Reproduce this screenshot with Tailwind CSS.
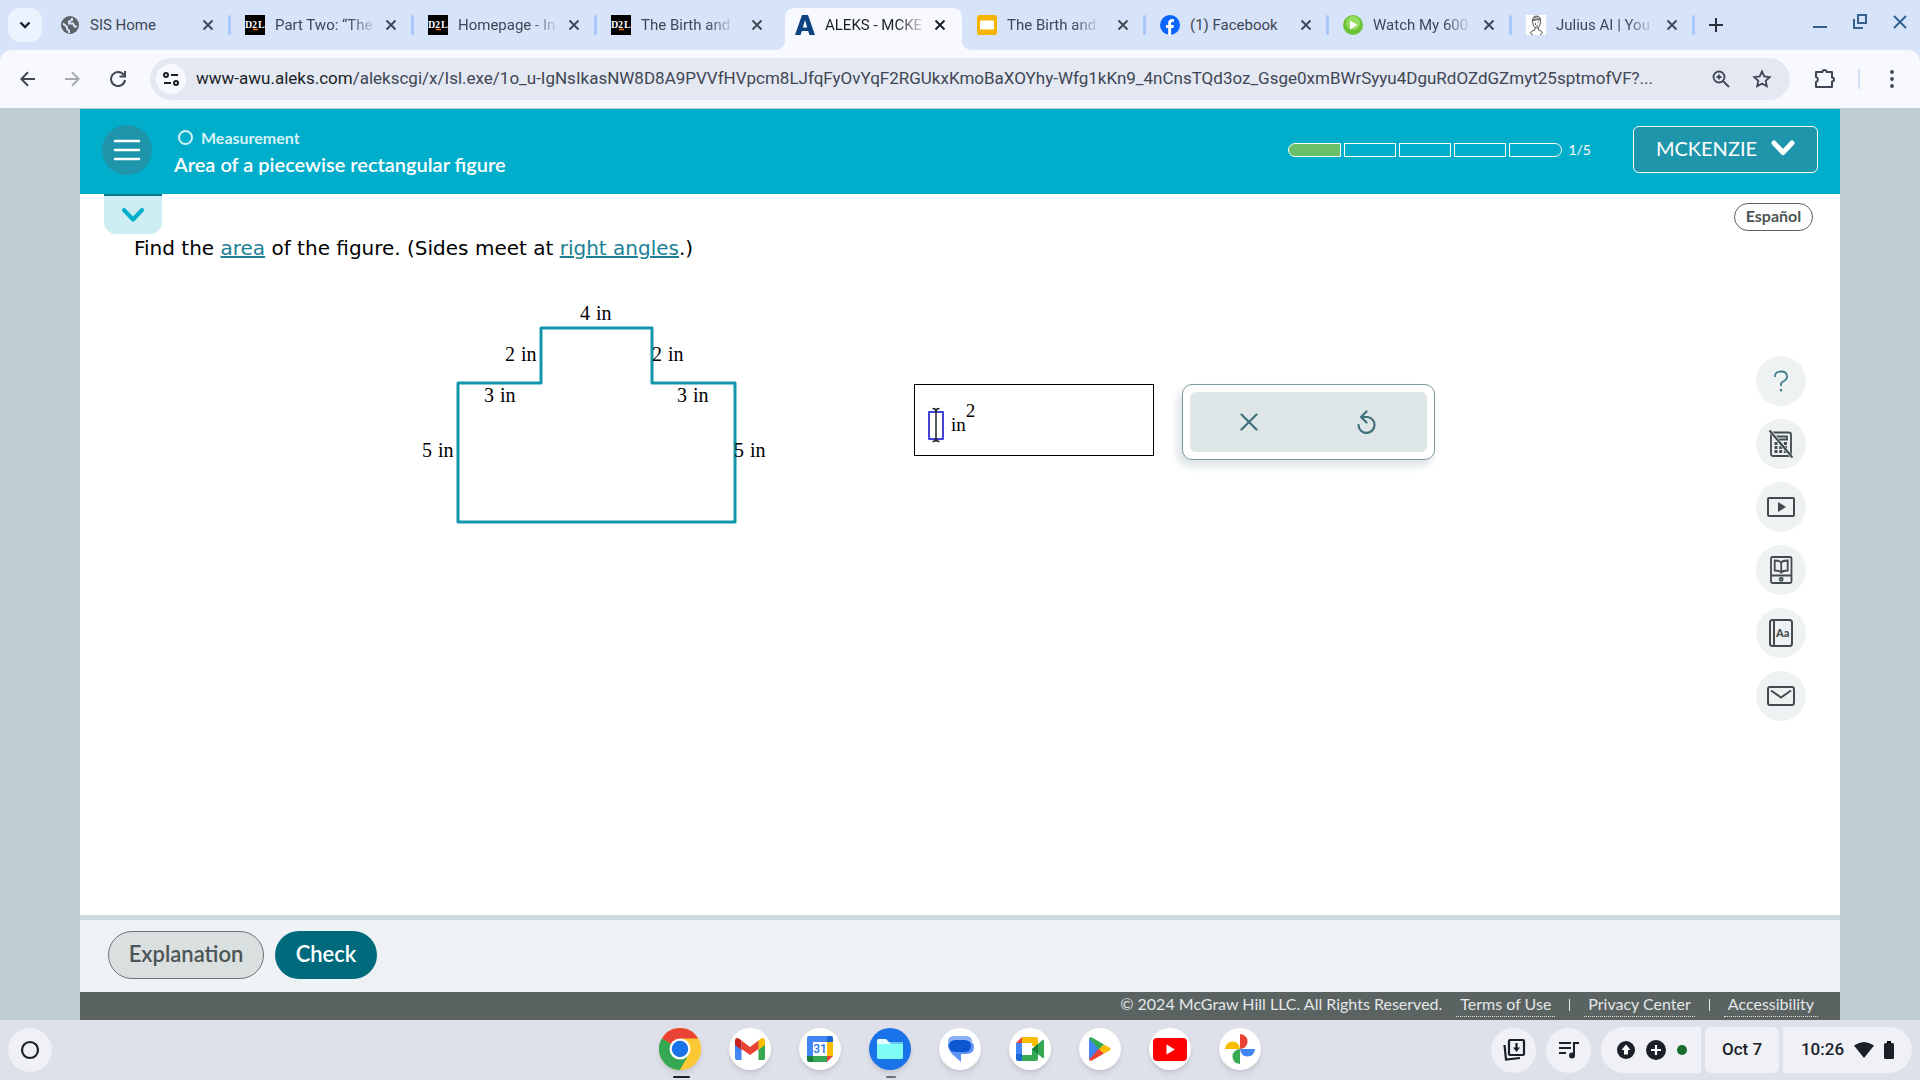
<!DOCTYPE html>
<html lang="en">
<head>
<meta charset="utf-8">
<title>ALEKS - Area of a piecewise rectangular figure</title>
<script src="https://cdn.jsdelivr.net/npm/@tailwindcss/browser@4"></script>
</head>
<body class="min-h-screen flex flex-col bg-[#c0cdd3] font-['Roboto',sans-serif] text-[#3f4654] overflow-x-hidden">

<svg class="hidden">
  <symbol id="x" viewBox="0 0 12 12"><path d="M1.500 1.500l9 9M10.500 1.500l-9 9" stroke="currentColor" stroke-width="1.900" fill="none"/></symbol>
  <symbol id="d2l" viewBox="0 0 20 20"><rect width="20" height="20" fill="#000"/><g font-family="Liberation Serif, serif" font-size="10" font-weight="700" fill="#fff"><text x="0" y="13">D</text><text x="7" y="13">2</text><text x="13" y="13">L</text></g><path d="M8 14.500h5" stroke="#e87511" stroke-width="1.500"/></symbol>
</svg>

<!-- Tab strip -->
<div class="flex h-[50px] bg-[#d7e3f9] pl-2">
  <button aria-label="Search tabs" class="mt-2 h-[34px] w-[34px] shrink-0 rounded-xl bg-[#ecf2fe] grid place-items-center"><svg class="size-3" viewBox="0 0 12 12" fill="none" stroke="#1b1f27" stroke-width="2.400"><path d="M1.500 3.500L6 8l4.500-4.500"/></svg></button>
  <div class="flex min-w-0 pl-1.5" role="tablist">
    <div class="flex h-[50px] w-[183px] min-w-0 items-center pl-3 pr-[17px] relative" role="tab">
      <svg class="size-5 shrink-0" viewBox="0 0 20 20"><circle cx="10" cy="10" r="9" fill="#5f6368"/><path d="M3 8.500l4 3.500v2l2 1.500V18M12 3v2l-3 1.500v2h4l1.500 3H17" stroke="#d7e3f9" stroke-width="2" fill="none"/></svg>
      <span class="ml-2.5 whitespace-nowrap text-[15px]">SIS Home</span>
      <button aria-label="Close tab" class="ml-auto"><svg class="size-3"><use href="#x"/></svg></button>
      <i class="absolute right-0 top-[15px] h-5 w-[3px] rounded bg-[#a8c7fa]"></i>
    </div>
    <div class="flex h-[50px] w-[183px] min-w-0 items-center pl-3.5 pr-[17px] relative" role="tab">
      <svg class="size-5 shrink-0"><use href="#d2l"/></svg>
      <span class="ml-2.5 whitespace-nowrap text-[15px] mask-r-from-75% mask-r-to-105%">Part Two: “The</span>
      <button aria-label="Close tab" class="ml-auto"><svg class="size-3"><use href="#x"/></svg></button>
      <i class="absolute right-0 top-[15px] h-5 w-[3px] rounded bg-[#a8c7fa]"></i>
    </div>
    <div class="flex h-[50px] w-[183px] min-w-0 items-center pl-3.5 pr-[17px] relative" role="tab">
      <svg class="size-5 shrink-0"><use href="#d2l"/></svg>
      <span class="ml-2.5 whitespace-nowrap text-[15px] mask-r-from-75% mask-r-to-105%">Homepage - In</span>
      <button aria-label="Close tab" class="ml-auto"><svg class="size-3"><use href="#x"/></svg></button>
      <i class="absolute right-0 top-[15px] h-5 w-[3px] rounded bg-[#a8c7fa]"></i>
    </div>
    <div class="flex h-[50px] w-[183px] min-w-0 items-center pl-3.5 pr-[17px]" role="tab">
      <svg class="size-5 shrink-0"><use href="#d2l"/></svg>
      <span class="ml-2.5 whitespace-nowrap text-[15px] mask-r-from-75% mask-r-to-105%">The Birth and</span>
      <button aria-label="Close tab" class="ml-auto"><svg class="size-3"><use href="#x"/></svg></button>
    </div>
    <div class="relative mt-2 flex h-[42px] w-[183px] min-w-0 pb-2 items-center pl-[15px] pr-[17px] text-[#1b1f27]" role="tab" aria-selected="true">
      <svg class="absolute inset-y-0 -left-1 h-[42px] w-[195px]" viewBox="0 0 195 42"><path d="M-2 42c8 0 11-4 11-11V10Q9 0 19 0h157q10 0 10 10v21c0 7 3 11 11 11z" fill="#f8f9fe"/></svg>
      <svg class="relative size-5 shrink-0" viewBox="0 0 20 20"><path d="M0 20L7 0h6L20 20h-5.500l-1.300-4H6.800l-1.300 4zM7.800 12.500h4.400L10 5z" fill="#0b4280" fill-rule="evenodd"/></svg>
      <span class="relative ml-2.5 whitespace-nowrap text-[15px] mask-r-from-75% mask-r-to-105%">ALEKS - MCKE</span>
      <button aria-label="Close tab" class="relative ml-auto"><svg class="size-3"><use href="#x"/></svg></button>
    </div>
    <div class="flex h-[50px] w-[183px] min-w-0 items-center pl-3.5 pr-[17px] relative" role="tab">
      <svg class="size-5 shrink-0" viewBox="0 0 20 20"><rect width="20" height="20" rx="2.500" fill="#f4b400"/><rect x="3" y="5.500" width="14" height="9" rx="1" fill="#fff"/></svg>
      <span class="ml-2.5 whitespace-nowrap text-[15px] mask-r-from-75% mask-r-to-105%">The Birth and</span>
      <button aria-label="Close tab" class="ml-auto"><svg class="size-3"><use href="#x"/></svg></button>
      <i class="absolute right-0 top-[15px] h-5 w-[3px] rounded bg-[#a8c7fa]"></i>
    </div>
    <div class="flex h-[50px] w-[183px] min-w-0 items-center pl-3.5 pr-[17px] relative" role="tab">
      <svg class="size-5 shrink-0" viewBox="0 0 20 20"><circle cx="10" cy="10" r="10" fill="#0866ff"/><path d="M8.200 20v-7H6v-3h2.200V8.500C8.200 5.600 9.600 4 12.200 4q1 0 1.800.2v2.600h-1.300c-1.200 0-1.600.6-1.600 1.600V10h2.800l-.5 3h-2.300v7z" fill="#fff"/></svg>
      <span class="ml-2.5 whitespace-nowrap text-[15px]">(1) Facebook</span>
      <button aria-label="Close tab" class="ml-auto"><svg class="size-3"><use href="#x"/></svg></button>
      <i class="absolute right-0 top-[15px] h-5 w-[3px] rounded bg-[#a8c7fa]"></i>
    </div>
    <div class="flex h-[50px] w-[183px] min-w-0 items-center pl-3.5 pr-[17px] relative" role="tab">
      <svg class="size-5 shrink-0" viewBox="0 0 20 20"><circle cx="10" cy="10" r="10" fill="#6cc336"/><circle cx="10" cy="8" r="7" fill="#93dc5e"/><path d="M7 5.500v9L14.500 10z" fill="#fff"/></svg>
      <span class="ml-2.5 whitespace-nowrap text-[15px] mask-r-from-75% mask-r-to-105%">Watch My 600</span>
      <button aria-label="Close tab" class="ml-auto"><svg class="size-3"><use href="#x"/></svg></button>
      <i class="absolute right-0 top-[15px] h-5 w-[3px] rounded bg-[#a8c7fa]"></i>
    </div>
    <div class="flex h-[50px] w-[183px] min-w-0 items-center pl-3.5 pr-[17px] relative" role="tab">
      <svg class="size-5 shrink-0" viewBox="0 0 20 20"><rect width="20" height="20" fill="#fff"/><g fill="none" stroke="#555" stroke-width="1"><path d="M6.500 6q0-5 4-5t4 5l-.5 4q-1 3-3.200 3T7.200 10zM6.500 4.500l8-1M6.500 6q4-2 8-1M8 2.500l5-1M9 13v2q-5 1-4.500 3.500L7 20M12.500 13v2q4 1 4 3L14 20M9.500 8v2M12.500 7h-1M10 11h2"/></g></svg>
      <span class="ml-2.5 whitespace-nowrap text-[15px] mask-r-from-75% mask-r-to-105%">Julius AI | You</span>
      <button aria-label="Close tab" class="ml-auto"><svg class="size-3"><use href="#x"/></svg></button>
      <i class="absolute right-0 top-[15px] h-5 w-[3px] rounded bg-[#a8c7fa]"></i>
    </div>
  </div>
  <button aria-label="New tab" class="ml-3.5"><svg class="size-3.5" viewBox="0 0 14 14" stroke="#2b303b" stroke-width="2"><path d="M7 0v14M0 7h14"/></svg></button>
  <div class="ml-auto flex gap-6 pr-3 h-11 items-center text-[#35618f]">
    <button aria-label="Minimize"><svg class="size-4" viewBox="0 0 16 16" stroke="currentColor" stroke-width="2"><path d="M1 13h14"/></svg></button>
    <button aria-label="Restore"><svg class="size-4" viewBox="0 0 16 16" stroke="currentColor" stroke-width="2" fill="none"><path d="M6 1h8v8H6zM2 5v9h9"/></svg></button>
    <button aria-label="Close"><svg class="size-4" viewBox="0 0 16 16" stroke="currentColor" stroke-width="2"><path d="M2 2l12 12M14 2L2 14"/></svg></button>
  </div>
</div>

<!-- Toolbar -->
<div class="bg-[#d7e3f9]">
<div class="flex h-[58px] items-center rounded-t-xl bg-[#f8f9fe] pl-5 pr-[18px] text-[#3f4654]">
  <button aria-label="Back"><svg class="size-4" viewBox="0 0 16 16" stroke="currentColor" stroke-width="2" fill="none"><path d="M15 8H1.500M8 1.200L1.300 8 8 14.800"/></svg></button>
  <button aria-label="Forward" class="ml-7 text-[#a6a9b0]"><svg class="size-4" viewBox="0 0 16 16" stroke="currentColor" stroke-width="2" fill="none"><path d="M1 8h13.500M8 1.200L14.700 8 8 14.800"/></svg></button>
  <button aria-label="Reload" class="ml-[30px]"><svg class="size-4" viewBox="0 0 16 16" stroke="currentColor" stroke-width="2" fill="none"><path d="M13.800 4A7 7 0 1 0 15 9M15 0v5.500H9.500"/></svg></button>
  <div class="ml-6 flex h-[42px] min-w-0 flex-1 items-center rounded-full bg-[#e4e8f2] pl-1.5 pr-[18px]">
    <button aria-label="Site information" class="grid size-[30px] shrink-0 place-items-center rounded-full bg-[#f8f9fe] text-[#1b1f27]"><svg class="size-4" viewBox="0 0 16 16" stroke="currentColor" stroke-width="2" fill="none"><circle cx="3" cy="4" r="2"/><path d="M8 4h7M1 12h7"/><circle cx="13" cy="12" r="2"/></svg></button>
    <div class="ml-2.5 min-w-0 flex-1 truncate text-[17px]"><span class="text-[#1b1f27]">www-awu.aleks.com</span>/alekscgi/x/Isl.exe/1o_u-IgNsIkasNW8D8A9PVVfHVpcm8LJfqFyOvYqF2RGUkxKmoBaXOYhy-Wfg1kKn9_4nCnsTQd3oz_Gsge0xmBWrSyyu4DguRdOZdGZmyt25sptmofVF?...</div>
    <button aria-label="Zoom" class="ml-5"><svg class="size-[18px]" viewBox="0 0 18 18" stroke="currentColor" stroke-width="1.800" fill="none"><circle cx="7" cy="7" r="5.500"/><path d="M11 11l6 6M7 4.500v5M4.500 7h5"/></svg></button>
    <button aria-label="Bookmark this page" class="ml-[22px]"><svg class="size-5" viewBox="0 0 20 20" stroke="currentColor" stroke-width="1.800" fill="none"><path d="M10 2.500l2.300 5 5.400.6-4 3.700 1.100 5.400L10 14.500l-4.800 2.700 1.100-5.400-4-3.700 5.400-.6z"/></svg></button>
  </div>
  <button aria-label="Extensions" class="ml-6"><svg class="size-[22px]" viewBox="0 0 22 22" stroke="currentColor" stroke-width="2" fill="none"><path d="M2 4h6.500a2 2 0 0 1 4 0H18v5.500a2 2 0 0 1 0 4V19H2v-5a2.600 2.600 0 0 0 0-5z" stroke-linejoin="round"/></svg></button>
  <i class="ml-[22px] h-5 w-0.5 bg-[#d3e1f8]"></i>
  <button aria-label="Menu" class="ml-[22px]"><svg class="size-5" viewBox="0 0 20 20" fill="currentColor"><circle cx="10" cy="3" r="1.900"/><circle cx="10" cy="10" r="1.900"/><circle cx="10" cy="17" r="1.900"/></svg></button>
</div>
</div>

<!-- Page -->
<div class="mx-20 mt-px flex flex-1 flex-col bg-white font-['Lato',sans-serif]">
  <header class="flex h-[85px] items-center bg-[#00adca] px-[22px] pb-1 text-white">
    <button aria-label="Main menu" class="grid size-[50px] place-items-center rounded-full bg-[#1f95ab]"><svg class="h-6 w-7" viewBox="0 0 28 24" stroke="#fff" stroke-width="2.400" stroke-linecap="round"><path d="M2 3h24M2 12h24M2 21h24"/></svg></button>
    <div class="ml-[22px] pt-1">
      <div class="flex items-center gap-2 text-base leading-6 font-bold text-[#d3f3f8]"><i class="ml-1 size-[15px] rounded-full border-2 border-[#d3f3f8]"></i>Measurement</div>
      <h1 class="text-xl leading-7 font-semibold">Area of a piecewise rectangular figure</h1>
    </div>
    <div class="ml-auto flex items-center gap-[3px]" role="img" aria-label="1 of 5 complete">
      <i class="h-3.5 w-[53px] rounded-l-full border border-white bg-[#6abf69]"></i>
      <i class="h-3.5 w-[52px] border border-white"></i>
      <i class="h-3.5 w-[52px] border border-white"></i>
      <i class="h-3.5 w-[52px] border border-white"></i>
      <i class="h-3.5 w-[53px] rounded-r-full border border-white"></i>
    </div>
    <span class="ml-1.5 text-sm">1/5</span>
    <button class="ml-[42px] flex h-[47px] w-[185px] items-center justify-center gap-3.5 rounded-md border border-white bg-[#1f95ab] pb-1 text-xl">MCKENZIE<svg class="h-4 w-6" viewBox="0 0 24 16" fill="none" stroke="#fff" stroke-width="5" stroke-linecap="round" stroke-linejoin="round"><path d="M3 3l9 9.500L21 3"/></svg></button>
  </header>

  <main class="flex flex-1">
    <div class="flex-1">
      <button aria-label="Show topic details" class="ml-6 grid h-10 w-[58px] place-items-center rounded-b-xl border-t-2 border-[#0d7489] bg-[#cceef3]"><svg class="h-4 w-6" viewBox="0 0 24 16" fill="none" stroke="#00adca" stroke-width="4" stroke-linecap="round" stroke-linejoin="round"><path d="M3 3l9 9.500L21 3"/></svg></button>
      <p class="ml-[54px] font-['DejaVu_Sans',sans-serif] text-xl leading-7 text-black">Find the <a href="#" class="text-[#1b7f95] underline">area</a> of the figure. (Sides meet at <a href="#" class="text-[#1b7f95] underline">right angles</a>.)</p>
      <div class="mt-[38px] ml-[335px] flex items-start">
        <svg class="h-[230px] w-[360px] shrink-0" viewBox="0 0 360 230" role="img" aria-label="Piecewise rectangular figure with labelled sides">
          <path d="M43 83h83V28h111v55h83v139H43z" fill="none" stroke="#1396ab" stroke-width="3" stroke-linejoin="round"/>
          <g font-family="Liberation Serif, serif" font-size="20" xml:space="preserve">
            <text x="165" y="20">4</text><text x="181" y="20">in</text>
            <text x="90" y="61">2</text><text x="106" y="61">in</text>
            <text x="237" y="61">2</text><text x="253" y="61">in</text>
            <text x="69" y="102">3</text><text x="85" y="102">in</text>
            <text x="262" y="102">3</text><text x="278" y="102">in</text>
            <text x="7" y="157">5</text><text x="23" y="157">in</text>
            <text x="319" y="157">5</text><text x="335" y="157">in</text>
          </g>
        </svg>
        <div class="mt-[84px] ml-[139px] flex h-[72px] w-[240px] items-start border border-black pt-[26px] pl-[13px] font-['Liberation_Serif',serif] text-[19px] text-black">
          <div class="relative">
            <input aria-label="Area in square inches" class="block h-[29px] w-4 rounded-[1px] border-2 border-[#4343d8] outline-none">
            <svg class="absolute -top-1 left-0 h-9 w-4" viewBox="0 0 16 36" fill="none" stroke="#222" stroke-width="1.500"><path d="M4.500 1.500q3.500 0 3.500 2.500v28q0 2.500-3.500 2.500M11.500 1.500Q8 1.500 8 4v28q0 2.500 3.500 2.500"/></svg>
          </div>
          <span class="ml-[7px] leading-7">in</span><span class="-mt-3.5 leading-7">2</span>
        </div>
        <div class="mt-[84px] ml-7 h-[76px] w-[253px] rounded-[10px] border border-[#7d999f] bg-white p-[7px] shadow-[-4px_6px_8px_#dbe3e5]">
          <div class="flex h-full items-center justify-around rounded-md bg-[#dee6e8] text-[#3f6f7b]">
            <button aria-label="Clear"><svg class="size-[18px]" viewBox="0 0 18 18" stroke="currentColor" stroke-width="2.200" stroke-linecap="round"><path d="M1.500 1.500l15 15M16.500 1.500l-15 15"/></svg></button>
            <button aria-label="Undo"><svg class="h-6 w-5" viewBox="0 0 20 24" stroke="currentColor" stroke-width="2.200" stroke-linecap="round" stroke-linejoin="round" fill="none"><path d="M9.500 1.500L4 7l5.500 5.500M4 7h6.500a8 8 0 1 1-9 8"/></svg></button>
          </div>
        </div>
      </div>
    </div>
    <aside class="flex flex-col items-end pr-[27px] text-[#414b4c]">
      <button class="mt-[9px] h-7 w-[79px] rounded-full border border-[#5a6262] pb-0.5 text-base leading-6 font-bold text-[#4c5556]">Español</button>
      <div class="mt-[125px] mr-[7px] flex flex-col gap-[13px]">
        <button aria-label="Help" class="grid size-[50px] place-items-center rounded-full bg-[#eff2f2]"><svg class="h-[22px] w-4" viewBox="0 0 16 22" fill="none" stroke="#3f7f8e" stroke-width="1.800"><path d="M2 7V6q0-4.500 6-4.500t6 5q0 3-3 4.500-3 1.300-3 3V16"/><path d="M8 19v2.300" stroke-width="2.200"/></svg></button>
        <button aria-label="Calculator disabled" class="grid size-[50px] place-items-center rounded-full bg-[#eff2f2]"><svg class="h-7 w-6" viewBox="0 0 24 28" fill="none" stroke="currentColor" stroke-width="1.800"><rect x="2" y="2.500" width="20" height="23.500" rx="2"/><path d="M6 6.500h12v3H8"/><path d="M5.500 13.500H19M5.500 17.500H19M5.500 21.500H19" stroke-width="2.800" stroke-dasharray="3 1.700"/><path d="M2 2l20 24" stroke="#eff2f2" stroke-width="3.200"/><path d="M.5.500l23 27" stroke-width="2.200"/></svg></button>
        <button aria-label="Video" class="grid size-[50px] place-items-center rounded-full bg-[#eff2f2]"><svg class="h-5 w-7" viewBox="0 0 28 20" fill="none" stroke="currentColor" stroke-width="2"><rect x="1" y="1" width="26" height="18" rx="1"/><path d="M11 5v10l8-5z" fill="currentColor" stroke="none"/></svg></button>
        <button aria-label="E-book" class="grid size-[50px] place-items-center rounded-full bg-[#eff2f2]"><svg class="h-7 w-6" viewBox="0 0 24 28" fill="none" stroke="currentColor" stroke-width="1.800"><rect x="2" y="1" width="20.500" height="26" rx="1.500"/><path d="M2 19.500h20.500M12.200 6.500v10M5.700 4.500q5 0 6.500 2 1.500-2 6.500-2V14.500q-5 0-6.500 2-1.500-2-6.500-2z"/><circle cx="12.200" cy="23.300" r="1.500"/></svg></button>
        <button aria-label="Dictionary" class="grid size-[50px] place-items-center rounded-full bg-[#eff2f2]"><svg class="h-7 w-6" viewBox="0 0 24 28" fill="none" stroke="currentColor" stroke-width="2"><rect x="1" y="1" width="22" height="26" rx="2.500"/><path d="M5 1v26"/><text x="7" y="18" font-family="Lato, sans-serif" font-size="11" font-weight="900" fill="currentColor" stroke="none">Aa</text></svg></button>
        <button aria-label="Message" class="grid size-[50px] place-items-center rounded-full bg-[#eff2f2]"><svg class="h-5 w-7" viewBox="0 0 28 20" fill="none" stroke="currentColor" stroke-width="2"><rect x="1" y="1" width="26" height="18" rx="2"/><path d="M4 4.500l10 7 10-7"/></svg></button>
      </div>
    </aside>
  </main>

  <div class="flex h-[77px] items-center gap-[11px] border-t-5 border-[#cdd8dc] bg-[#eef2f4] pb-0.5 pl-7 text-[22px] font-semibold">
    <button class="h-12 w-[156px] rounded-full border border-[#6d7576] bg-[#dae0e0] pb-1 text-[#4c5556]">Explanation</button>
    <button class="h-12 w-[102px] rounded-full bg-[#006a7d] pb-1 text-white">Check</button>
  </div>
  <footer class="flex h-7 items-start justify-end bg-[#5a6262] pr-[22px] text-base leading-6 text-[#e3e8e8]">
    <span>© 2024 McGraw Hill LLC. All Rights Reserved.</span>
    <a href="#" class="ml-3.5 border-b border-dotted px-1">Terms of Use</a>
    <i class="mx-3.5 mt-[7px] h-3 w-px bg-[#e3e8e8]"></i>
    <a href="#" class="border-b border-dotted px-1">Privacy Center</a>
    <i class="mx-3.5 mt-[7px] h-3 w-px bg-[#e3e8e8]"></i>
    <a href="#" class="border-b border-dotted px-1">Accessibility</a>
  </footer>
</div>

<!-- Shelf -->
<div class="grid h-[60px] grid-cols-[1fr_auto_1fr] items-center bg-[#dee1ea] px-2 text-[#1b1f27]">
  <button aria-label="Launcher" class="grid size-11 place-items-center rounded-full bg-[#f0f0f7]"><svg class="size-5" viewBox="0 0 20 20"><circle cx="10" cy="10" r="8" fill="none" stroke="currentColor" stroke-width="2.200"/></svg></button>
  <div class="flex gap-7 pb-0.5">
    <button aria-label="Chrome" class="relative size-[42px] rounded-full shadow-md"><svg viewBox="0 0 42 42"><circle cx="21" cy="21" r="21" fill="#fbc934"/><path d="M21 21L2.800 10.500A21 21 0 0 1 39.200 10.500z" fill="#ea4335"/><path d="M21 21L2.800 10.500A21 21 0 0 0 21 42l9-16z" fill="#34a853"/><path d="M21 10.500h18.200A21 21 0 0 1 21 42l9.500-16z" fill="#fbc934"/><circle cx="21" cy="21" r="10.500" fill="#fff"/><circle cx="21" cy="21" r="8.200" fill="#1a73e8"/></svg><i class="absolute -bottom-2 left-3.5 h-0.5 w-[17px] rounded bg-[#1b1f27]"></i></button>
    <button aria-label="Gmail" class="grid size-[42px] place-items-center rounded-full bg-white shadow-md"><svg class="h-6 w-8" viewBox="0 0 32 24"><path d="M1 6h6.500v17H3q-2 0-2-2z" fill="#4285f4"/><path d="M24.500 6H31v15q0 2-2 2h-4.500z" fill="#34a853"/><path d="M24.500 3.500L27 1.500q4-1.500 4 2.500v4l-6.500 5z" fill="#fbbc04"/><path d="M7.500 3.500L5 1.500Q1 0 1 4v4l6.500 5z" fill="#c5221f"/><path d="M7.500 3.500L16 10l8.500-6.500V12L16 18l-8.500-6z" fill="#ea4335"/></svg></button>
    <button aria-label="Calendar" class="grid size-[42px] place-items-center rounded-full bg-white shadow-md"><svg class="size-[26px]" viewBox="0 0 26 26"><path d="M0 2q0-2 2-2h18v6H6v14H0z" fill="#4285f4"/><path d="M20 0h4q2 0 2 2v4h-6z" fill="#1967d2"/><path d="M20 6h6v14h-6z" fill="#fbbc04"/><path d="M6 20h14v6H6z" fill="#34a853"/><path d="M0 20h6v6H2q-2 0-2-2z" fill="#188038"/><path d="M20 20h6l-6 6z" fill="#ea4335"/><text x="13" y="17" text-anchor="middle" font-family="Roboto, sans-serif" font-size="12" font-weight="500" fill="#1a73e8">31</text></svg></button>
    <button aria-label="Files" class="relative grid size-[42px] place-items-center rounded-full bg-[#1a73e8] shadow-md"><svg class="h-5 w-[26px]" viewBox="0 0 26 20"><path d="M0 1.500Q0 0 1.500 0H9l3 3h12.500Q26 3 26 4.500V8H0z" fill="#e8fbff"/><path d="M12 3h12.500Q26 3 26 4.500V8h-9z" fill="#66c8f0"/><path d="M0 5h26v13.500q0 1.500-1.500 1.500h-23Q0 20 0 18.500z" fill="#7efdf4"/></svg><i class="absolute -bottom-2 left-[17px] h-0.5 w-2.5 rounded bg-[#6c6f78]"></i></button>
    <button aria-label="Messages" class="grid size-[42px] place-items-center rounded-full bg-white shadow-md"><svg class="h-[26px] w-7" viewBox="0 0 28 26"><path d="M8 0h12q6 0 6 6H2q0-6 6-6z" fill="#8ab0f8"/><path d="M5 5h17q6 1 6 6 0 7-8 7h-5v8L6 18q-5-6-4-11z" fill="#5f92f5"/><rect x="3" y="4" width="22" height="12" rx="6" fill="#0b57d0"/></svg></button>
    <button aria-label="Meet" class="grid size-[42px] place-items-center rounded-full bg-white shadow-md"><svg class="h-6 w-7" viewBox="0 0 28 24"><path d="M6 0h14q2 0 2 2v7h-6V6H6z" fill="#fbbc04"/><path d="M0 6l6-6v6z" fill="#ea4335"/><path d="M0 6h6v12H0z" fill="#4285f4"/><path d="M0 17h6v7H2q-2 0-2-2z" fill="#1967d2"/><path d="M6 18h10v-6l6-4v14q0 2-2 2H6z" fill="#34a853"/><path d="M16 12l10.500-9q1.500-.6 1.500 1v16q0 1.600-1.500 1z" fill="#34a853"/><path d="M16 12l6-5v10z" fill="#188038"/></svg></button>
    <button aria-label="Play Store" class="grid size-[42px] place-items-center rounded-full bg-white shadow-md"><svg class="h-6 w-[22px]" viewBox="0 0 22 24"><path d="M0 1v22l11-11z" fill="#4285f4"/><path d="M0 1.500Q.5-.5 3 .500L15 7.500l-5 5z" fill="#34a853"/><path d="M0 22.500q.5 2 3 1l12-7-5-5z" fill="#ea4335"/><path d="M15 7.500l6 3.300q1.500 1.200 0 2.400l-6 3.300L10 12z" fill="#fbbc04"/></svg></button>
    <button aria-label="YouTube" class="grid size-[42px] place-items-center rounded-full bg-white shadow-md"><svg class="h-[23px] w-[34px]" viewBox="0 0 34 23"><rect width="34" height="23" rx="4" fill="#f00"/><path d="M13.500 6.500v10l8.500-5z" fill="#fff"/></svg></button>
    <button aria-label="Photos" class="grid size-[42px] place-items-center rounded-full bg-white shadow-md"><svg class="size-[30px]" viewBox="0 0 30 30"><path d="M15 15V0q7.500 1 7.500 7.500T15 15z" fill="#ea4335"/><path d="M15 15h15q-1 7.500-7.500 7.500T15 15z" fill="#4285f4"/><path d="M15 15v15q-7.500-1-7.500-7.500T15 15z" fill="#34a853"/><path d="M15 15H0q1-7.500 7.500-7.500T15 15z" fill="#fbbc04"/></svg></button>
  </div>
  <div class="flex items-center justify-end text-[17px] font-medium">
    <button aria-label="Downloads" class="grid size-[45px] place-items-center rounded-full bg-[#f0f0f7]"><svg class="size-6" viewBox="0 0 24 24" fill="none" stroke="currentColor" stroke-width="2.200"><rect x="7" y="2" width="15" height="15" rx="1"/><path d="M2.500 7L4 21.500 18 20M14.500 5v6"/><path d="M11 9.500h7L14.500 14z" fill="currentColor" stroke="none"/></svg></button>
    <button aria-label="Media" class="ml-2.5 grid size-[45px] place-items-center rounded-full bg-[#f0f0f7]"><svg class="size-6" viewBox="0 0 24 24" fill="none" stroke="currentColor" stroke-width="2"><path d="M2 5h12M2 10h12M2 15h7M17 17V5h5"/><circle cx="15" cy="17.500" r="3" fill="currentColor" stroke="none"/></svg></button>
    <button aria-label="Tray" class="ml-2.5 flex h-[46px] w-[100px] items-center gap-[11px] rounded-l-full rounded-r-md bg-[#f0f0f7] pl-4"><svg class="size-[18px]" viewBox="0 0 18 18"><circle cx="9" cy="9" r="9" fill="currentColor"/><path d="M9 3.500l4.500 5.500H11v4.500H7V9H4.500z" fill="#fff"/></svg><svg class="size-5" viewBox="0 0 20 20"><circle cx="10" cy="10" r="10" fill="currentColor"/><path d="M10 5v10M5 10h10" stroke="#fff" stroke-width="2.200"/></svg><i class="size-2.5 rounded-full bg-[#146c2e]"></i></button>
    <button class="ml-1 h-[46px] w-[74px] rounded-md bg-[#f0f0f7]">Oct 7</button>
    <button class="ml-1 flex h-[46px] w-[129px] items-center justify-center gap-2.5 rounded-l-md rounded-r-full bg-[#f0f0f7]">10:26<svg class="h-4 w-5" viewBox="0 0 20 16"><path d="M0 3.500Q10-3.500 20 3.500L10 16z" fill="currentColor"/></svg><svg class="h-[18px] w-2.5" viewBox="0 0 10 18"><path d="M3 0h4v2H3z"/><rect y="2" width="10" height="16" rx="1.500" fill="currentColor"/></svg></button>
  </div>
</div>
</body>
</html>
